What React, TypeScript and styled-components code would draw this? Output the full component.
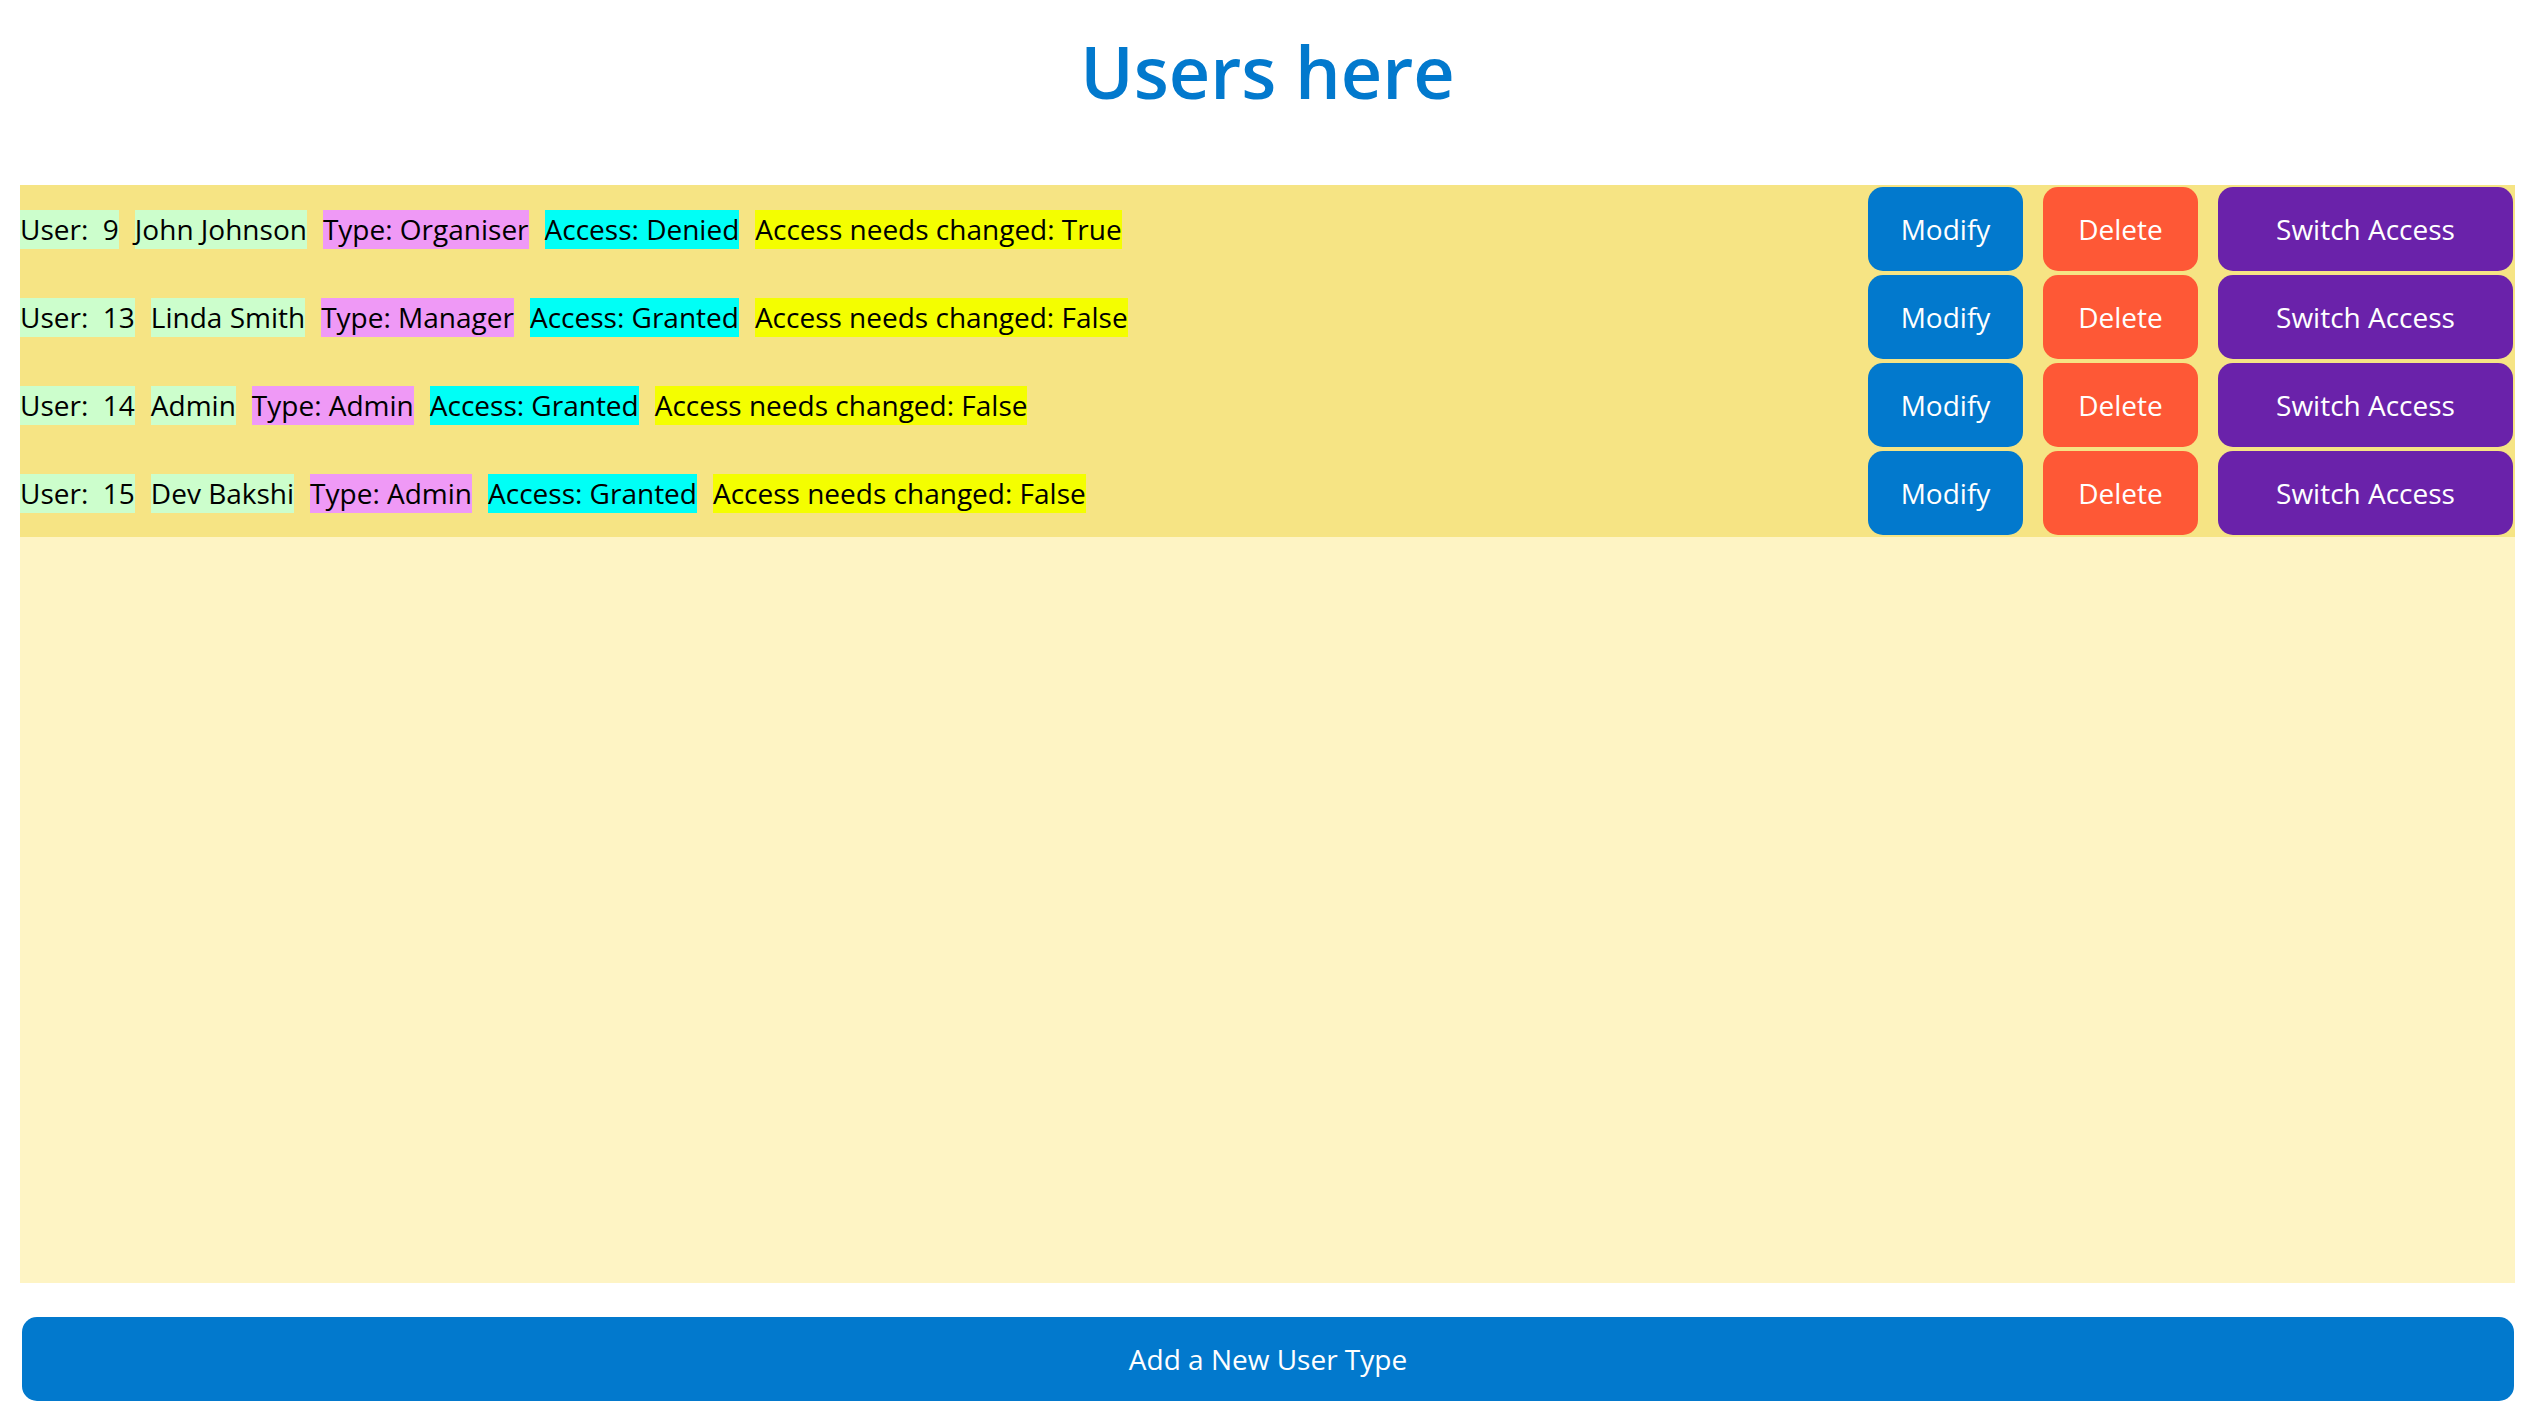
import * as React from "react";
import styled, { createGlobalStyle } from "styled-components";

interface User {
  id: number;
  name: string;
  type: string;
  access: "Granted" | "Denied";
  needsChange: boolean;
}

const users: User[] = [
  { id: 9, name: "John Johnson", type: "Organiser", access: "Denied", needsChange: true },
  { id: 13, name: "Linda Smith", type: "Manager", access: "Granted", needsChange: false },
  { id: 14, name: "Admin", type: "Admin", access: "Granted", needsChange: false },
  { id: 15, name: "Dev Bakshi", type: "Admin", access: "Granted", needsChange: false },
];

const App = () => {
  return (
    <>
      <GlobalStyle />
      <Page>
        <Title>Users here</Title>
        <ListBox>
          <UserList>
            {users.map((user) => (
              <UserRow key={user.id}>
                <Details>
                  <Tag colour="#ccfecc">{`User:\u00a0 ${user.id}`}</Tag>
                  <Tag colour="#ccfecc">{user.name}</Tag>
                  <Tag colour="#ef99f6">Type: {user.type}</Tag>
                  <Tag colour="#00fff6">Access: {user.access}</Tag>
                  <Tag colour="#f4fe00">
                    Access needs changed: {user.needsChange ? "True" : "False"}
                  </Tag>
                </Details>
                <Actions>
                  <ActionButton colour="#0279cd" width={155}>
                    Modify
                  </ActionButton>
                  <ActionButton colour="#fe5836" width={155}>
                    Delete
                  </ActionButton>
                  <ActionButton colour="#6a22aa" width={295}>
                    Switch Access
                  </ActionButton>
                </Actions>
              </UserRow>
            ))}
          </UserList>
        </ListBox>
        <AddButton>Add a New User Type</AddButton>
      </Page>
    </>
  );
};

const GlobalStyle = createGlobalStyle`
  body {
    margin: 0;
    background: #ffffff;
    font-family: "Open Sans", "Noto Sans", sans-serif;
  }
`;

const Page = styled.div`
  display: flex;
  flex-direction: column;
  padding: 0 15px 0 20px;
`;

const Title = styled.h1`
  margin: 22px 0 65px;
  text-align: center;
  font-size: 72px;
  font-weight: 600;
  color: #0279cd;
`;

const ListBox = styled.div`
  height: 1098px;
  background: #fef4c4;
`;

const UserList = styled.div`
  display: flex;
  flex-direction: column;
  background: #f6e484;
`;

const UserRow = styled.div`
  display: flex;
  justify-content: space-between;
  align-items: center;
  height: 88px;
`;

const Details = styled.div`
  display: flex;
  align-items: center;
  gap: 16px;
`;

const Tag = styled.span<{ colour: string }>`
  font-size: 28px;
  line-height: 39px;
  color: #000000;
  background: ${(p) => p.colour};
`;

const Actions = styled.div`
  display: flex;
  gap: 20px;
  padding-right: 2px;
`;

const ActionButton = styled.button<{ colour: string; width: number }>`
  width: ${(p) => p.width}px;
  height: 84px;
  border: none;
  border-radius: 15px;
  background: ${(p) => p.colour};
  color: #ffffff;
  font-family: "Open Sans", "Noto Sans", sans-serif;
  font-size: 28px;
  cursor: pointer;
`;

const AddButton = styled.button`
  margin: 34px 1px 0 2px;
  height: 84px;
  border: none;
  border-radius: 15px;
  background: #0279cd;
  color: #ffffff;
  font-family: "Open Sans", "Noto Sans", sans-serif;
  font-size: 28px;
  cursor: pointer;
`;

export default App;
